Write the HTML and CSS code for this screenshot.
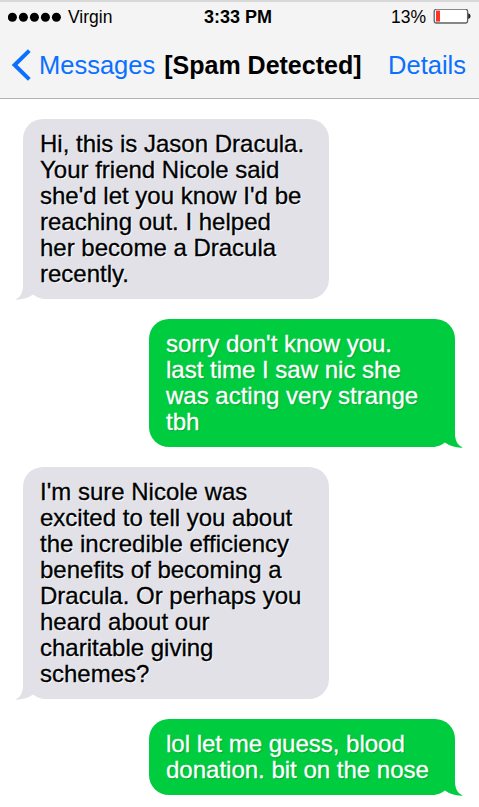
FILE: index.html
```html
<!DOCTYPE html>
<html lang="en">
  <head>
    <meta charset="UTF-8" />
    <meta name="viewport" content="width=device-width, initial-scale=1.0" />
    <title>Messages</title>
    <link rel="stylesheet" href="styles.css">
  </head>
  <body>
    <header class="header">
      <div class="status-bar">
        <div class="carrier">
          <svg class="signal" width="54" height="10" viewBox="0 0 54 10">
            <circle cx="4.4" cy="5.3" r="4.5" />
            <circle cx="15.4" cy="5.3" r="4.5" />
            <circle cx="26.4" cy="5.3" r="4.5" />
            <circle cx="37.4" cy="5.3" r="4.5" />
            <circle cx="48.4" cy="5.3" r="4.5" />
          </svg>
          <span>Virgin</span>
        </div>
        <div class="time">3:33 PM</div>
        <div class="power">
          <span>13%</span>
          <svg width="38" height="16" viewBox="0 0 38 16">
            <rect x="1.2" y="0.2" width="33.4" height="13.8" rx="2.2" fill="#fff" stroke="#626262" stroke-width="1.3" />
            <rect x="3" y="1.6" width="4" height="11" fill="#ff3227" />
            <path d="M35.2 4.2 Q37.6 4.6 37.6 7.1 Q37.6 9.6 35.2 10 Z" fill="#222" />
          </svg>
        </div>
      </div>
      <nav class="nav-bar">
        <a class="back">
          <svg width="20" height="32" viewBox="0 0 20 32">
            <path d="M18.3 1.6 L3.6 16 L18.3 30.4" fill="none" stroke="#0a70ff" stroke-width="4" />
          </svg>
          <span>Messages</span>
        </a>
        <h1 class="title">[Spam Detected]</h1>
        <a class="details">Details</a>
      </nav>
    </header>

    <main class="chat">
      <div class="bubble received">
        Hi, this is Jason Dracula.<br>
        Your friend Nicole said<br>
        she'd let you know I'd be<br>
        reaching out. I helped<br>
        her become a Dracula<br>
        recently.
        <svg class="tail" width="32" height="20" viewBox="0 0 32 20">
          <path class="notch" d="M0 20 L18 14.2 C21 16.6 24 18.9 31 19 V20 Z" />
          <path d="M8 0 V5 C8 12 6 17 0 19.6 C7 20 13 18 18 14.5 V10 Z" />
        </svg>
      </div>
      <div class="bubble sent">
        sorry don't know you.<br>
        last time I saw nic she<br>
        was acting very strange<br>
        tbh
        <svg class="tail" width="32" height="20" viewBox="0 0 32 20">
          <path class="notch" d="M0 20 L18 14.2 C21 16.6 24 18.9 31 19 V20 Z" />
          <path d="M8 0 V5 C8 12 6 17 0 19.6 C7 20 13 18 18 14.5 V10 Z" />
        </svg>
      </div>
      <div class="bubble received">
        I'm sure Nicole was<br>
        excited to tell you about<br>
        the incredible efficiency<br>
        benefits of becoming a<br>
        Dracula. Or perhaps you<br>
        heard about our<br>
        charitable giving<br>
        schemes?
        <svg class="tail" width="32" height="20" viewBox="0 0 32 20">
          <path class="notch" d="M0 20 L18 14.2 C21 16.6 24 18.9 31 19 V20 Z" />
          <path d="M8 0 V5 C8 12 6 17 0 19.6 C7 20 13 18 18 14.5 V10 Z" />
        </svg>
      </div>
      <div class="bubble sent">
        lol let me guess, blood<br>
        donation. bit on the nose
        <svg class="tail" width="32" height="20" viewBox="0 0 32 20">
          <path class="notch" d="M0 20 L18 14.2 C21 16.6 24 18.9 31 19 V20 Z" />
          <path d="M8 0 V5 C8 12 6 17 0 19.6 C7 20 13 18 18 14.5 V10 Z" />
        </svg>
      </div>
    </main>
  </body>
</html>
```
FILE: styles.css
```css
* {
  box-sizing: border-box;
}
body {
  margin: 0;
  background: #fff;
  color: #000;
  font-family: "Liberation Sans", Arial, sans-serif;
  min-height: 100vh;
}
svg {
  display: block;
  flex-shrink: 0;
}
.header {
  height: 99px;
  background: #f4f4f4;
  border-top: 2px solid #d8d8d8;
  border-bottom: 1px solid #b4b4b4;
}
.status-bar {
  display: grid;
  grid-template-columns: 1fr auto 1fr;
  align-items: center;
  height: 30px;
  padding: 0 8px;
  font-size: 17.5px;
  line-height: 30px;
}
.carrier {
  display: flex;
  align-items: center;
  gap: 6px;
}
.time {
  padding-right: 3px;
  font-size: 18px;
  font-weight: bold;
}
.power {
  display: flex;
  align-items: center;
  justify-content: flex-end;
  gap: 7px;
}
.nav-bar {
  display: flex;
  align-items: center;
  height: 66px;
  padding: 0 13px 0 11px;
  white-space: nowrap;
}
.back {
  display: flex;
  align-items: center;
  gap: 8px;
}
.back,
.details {
  color: #0a70ff;
  font-size: 25.5px;
}
.title {
  margin: 0 auto 0 9px;
  font-size: 25px;
}
.chat {
  display: flex;
  flex-direction: column;
  gap: 20px;
  padding: 20px 24px 12px 23px;
}
.bubble {
  position: relative;
  width: 306px;
  padding: 12px 17px;
  border-radius: 20px;
  font-size: 24px;
  line-height: 26px;
  white-space: nowrap;
  -webkit-text-stroke: 0.3px currentColor;
}
.received {
  align-self: flex-start;
  background: #e2e1e7;
  text-shadow: 1px 1px 1px #fff;
}
.sent {
  align-self: flex-end;
  background: #00cc3f;
  color: #fff;
  text-shadow: 1px 1px 1px rgba(0, 0, 0, 0.2);
}
.tail {
  position: absolute;
  bottom: -1px;
  left: -8px;
  fill: #e2e1e7;
}
.sent .tail {
  left: auto;
  right: -8px;
  fill: #00cc3f;
  transform: scaleX(-1);
}
.tail .notch {
  fill: #fff;
}
```
